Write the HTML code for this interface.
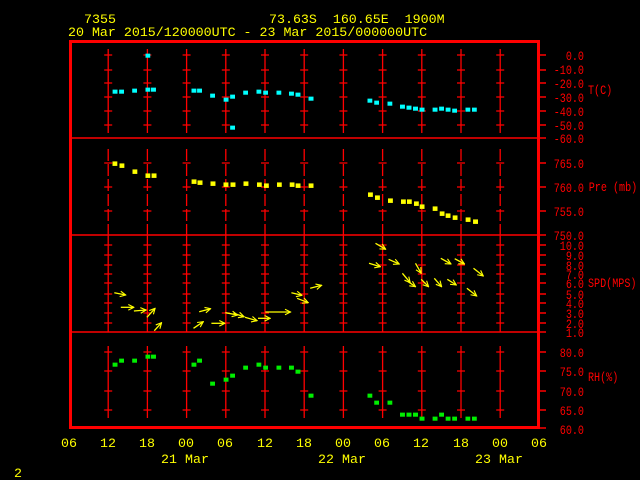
<!DOCTYPE html>
<html><head><meta charset="utf-8"><style>
html,body{margin:0;padding:0;background:#000;width:640px;height:480px;overflow:hidden}
svg{display:block}
text{font-family:"Liberation Mono",monospace;font-size:13.3px}
.y{fill:#ffff00}.r{fill:#ff0000}
</style></head><body>
<svg width="640" height="480" viewBox="0 0 640 480" xmlns="http://www.w3.org/2000/svg">
<defs>
<marker id="sqc" markerUnits="userSpaceOnUse" viewBox="0 0 10 10" refX="5" refY="5" markerWidth="12.25" markerHeight="15"><rect width="10" height="10" fill="#00ffff"/></marker>
<marker id="sqy" markerUnits="userSpaceOnUse" viewBox="0 0 10 10" refX="5" refY="5" markerWidth="13.5" markerHeight="15"><rect width="10" height="10" fill="#ffff00"/></marker>
<marker id="sqg" markerUnits="userSpaceOnUse" viewBox="0 0 10 10" refX="5" refY="5" markerWidth="12.25" markerHeight="15"><rect width="10" height="10" fill="#00ee00"/></marker>
<marker id="ah" viewBox="0 0 10 10" refX="9" refY="5" markerWidth="7" markerHeight="7" markerUnits="userSpaceOnUse" orient="auto"><path d="M1 1 L9 5 L1 9" fill="none" stroke="#ffff00" stroke-width="1.6"/></marker>
<g id="col" stroke="#ff0000" stroke-width="1.3">
<path d="M0 49V133 M-4 55h8 M-4 70h8 M-4 83h8 M-4 97h8 M-4 111h8 M-4 125h8"/>
<path d="M0 149V235" stroke-dasharray="12,3"/>
<path d="M-4 163h8 M-4 187h8 M-4 211h8"/>
<path d="M0 235V332 M-4 245h8 M-4 255h8 M-4 265h8 M-4 274h8 M-4 283h8 M-4 294h8 M-4 303h8 M-4 313h8 M-4 323h8"/>
<path d="M0 346V418 M-4 352h8 M-4 371h8 M-4 391h8 M-4 410h8"/>
</g>
</defs>
<use href="#col" x="147.4"/><use href="#col" x="186.6"/><use href="#col" x="225.8"/><use href="#col" x="265"/><use href="#col" x="304.2"/><use href="#col" x="343.4"/><use href="#col" x="382.6"/><use href="#col" x="421.8"/><use href="#col" x="461"/><use href="#col" x="500.2"/><use href="#col" x="108.2"/>
<g stroke="#ff0000" stroke-width="1.5">
<path d="M70 138H546 M70 235H546 M70 332H546"/>
<path d="M539 55h7 M539 70h7 M539 83h7 M539 97h7 M539 111h7 M539 125h7 M539 163h7 M539 187h7 M539 211h7 M539 245h7 M539 255h7 M539 265h7 M539 274h7 M539 283h7 M539 294h7 M539 303h7 M539 313h7 M539 323h7 M539 352h7 M539 371h7 M539 391h7 M539 410h7 M539 428h7"/>
</g>
<rect x="70.5" y="41.5" width="468" height="386" fill="none" stroke="#ff0000" stroke-width="3"/>

<g transform="scale(0.40816,0.33333)">
<polyline fill="none" stroke="none" marker-start="url(#sqc)" marker-mid="url(#sqc)" marker-end="url(#sqc)" points="282,275 298,275 330,272 362,269 376,269 362,167 475,272 489,272 521,287 554,299 570,290 570,383 602,278 634,275 651,278 683,278 714,281 730,284 762,296 906,302 923,308 955,311 986,320 1002,323 1018,326 1034,329 1066,329 1082,326 1098,329 1114,332 1146,329 1162,329"/>
</g>
<g transform="translate(60,135) scale(0.37037,0.33333)">
<polyline fill="none" stroke="none" marker-start="url(#sqy)" marker-mid="url(#sqy)" marker-end="url(#sqy)" points="148,86 167,92 202,110 237,122 254,122 362,140 378,143 413,146 448,149 467,149 502,146 538,149 557,152 592,149 627,149 643,152 678,152 838,179 857,188 892,197 927,200 943,200 962,206 978,215 1013,221 1032,236 1048,242 1067,248 1102,254 1122,260"/>
</g>
<g transform="translate(0,230) scale(0.40816,0.33333)">
<polyline fill="none" stroke="none" marker-start="url(#sqg)" marker-mid="url(#sqg)" marker-end="url(#sqg)" points="282,404 298,392 330,392 362,380 376,380 475,404 489,392 521,461 554,449 570,437 602,413 634,404 651,413 683,413 714,413 730,425 762,497 906,497 923,518 955,518 986,554 1002,554 1018,554 1034,566 1066,566 1082,554 1098,566 1114,566 1146,566 1162,566"/>
</g>
<g stroke="#ffff00" stroke-width="1.3" fill="none" marker-end="url(#ah)">
<path d="M114.3 292.7L125.7 295"/>
<path d="M120.8 307.3L133.9 307.3"/>
<path d="M133.9 311L146.1 310"/>
<path d="M146.9 317.3L155.1 308.3"/>
<path d="M154.3 330.7L161.6 322.7"/>
<path d="M193.5 328.3L203.3 321.7"/>
<path d="M199.2 311.7L210.6 308.7"/>
<path d="M211.4 323.3L224.9 323.3"/>
<path d="M225.3 312.7L237.6 315"/>
<path d="M233.5 313.3L244.1 316.7"/>
<path d="M244.9 317.3L257.1 320.7"/>
<path d="M258 318.3L270.2 318.3"/>
<path d="M265.3 312L290.6 312"/>
<path d="M291.4 292.7L302 295.3"/>
<path d="M297.1 298.3L308.2 302.7"/>
<path d="M310.2 288.3L321.6 285.3"/>
<path d="M375.5 243.3L385.7 249.3"/>
<path d="M369 263.3L380.4 266.7"/>
<path d="M388.6 259.3L399.2 264"/>
<path d="M415.5 263.3L421.2 273.3"/>
<path d="M402.4 273.3L410.2 282.7"/>
<path d="M408.2 281.7L415.5 286.7"/>
<path d="M421.2 279.3L428.6 286.7"/>
<path d="M434.3 278.3L441.6 286.7"/>
<path d="M447.3 279.3L456.3 285"/>
<path d="M440.8 258.3L451 264"/>
<path d="M454.7 258.7L464.5 264"/>
<path d="M473.5 268.3L483.3 276"/>
<path d="M466.9 288.3L476.7 296"/>
</g>

<text class="y" x="84" y="23">7355</text>
<text class="y" x="269" y="23" xml:space="preserve">73.63S  160.65E  1900M</text>
<text class="y" x="68" y="36">20 Mar 2015/120000UTC - 23 Mar 2015/000000UTC</text>

<g class="r" text-anchor="end" transform="translate(584,0) scale(0.76,1)">
<text x="0" y="60">0.0</text><text x="0" y="74">-10.0</text><text x="0" y="88">-20.0</text><text x="0" y="102">-30.0</text><text x="0" y="116">-40.0</text><text x="0" y="130">-50.0</text><text x="0" y="143">-60.0</text>
<text x="0" y="168">765.0</text><text x="0" y="192">760.0</text><text x="0" y="216">755.0</text><text x="0" y="240">750.0</text>
<text x="0" y="250">10.0</text><text x="0" y="260">9.0</text><text x="0" y="270">8.0</text><text x="0" y="279">7.0</text><text x="0" y="288">6.0</text><text x="0" y="299">5.0</text><text x="0" y="308">4.0</text><text x="0" y="318">3.0</text><text x="0" y="328">2.0</text><text x="0" y="337">1.0</text>
<text x="0" y="357">80.0</text><text x="0" y="376">75.0</text><text x="0" y="396">70.0</text><text x="0" y="415">65.0</text><text x="0" y="434">60.0</text>
</g>
<g class="r" transform="translate(588,0) scale(0.76,1)" style="font-size:12.5px">
<text x="0" y="94">T(C)</text><text x="1" y="191">Pre (mb)</text><text x="0" y="287">SPD(MPS)</text><text x="0" y="381">RH(%)</text>
</g>
<g class="y" text-anchor="middle">
<text x="69" y="447">06</text><text x="108" y="447">12</text><text x="147" y="447">18</text><text x="186" y="447">00</text><text x="225" y="447">06</text><text x="265" y="447">12</text><text x="304" y="447">18</text><text x="343" y="447">00</text><text x="382" y="447">06</text><text x="421" y="447">12</text><text x="461" y="447">18</text><text x="500" y="447">00</text><text x="539" y="447">06</text>
<text x="185" y="463">21 Mar</text><text x="342" y="463">22 Mar</text><text x="499" y="463">23 Mar</text>
</g>
<text class="y" x="14" y="477">2</text>
</svg>
</body></html>
